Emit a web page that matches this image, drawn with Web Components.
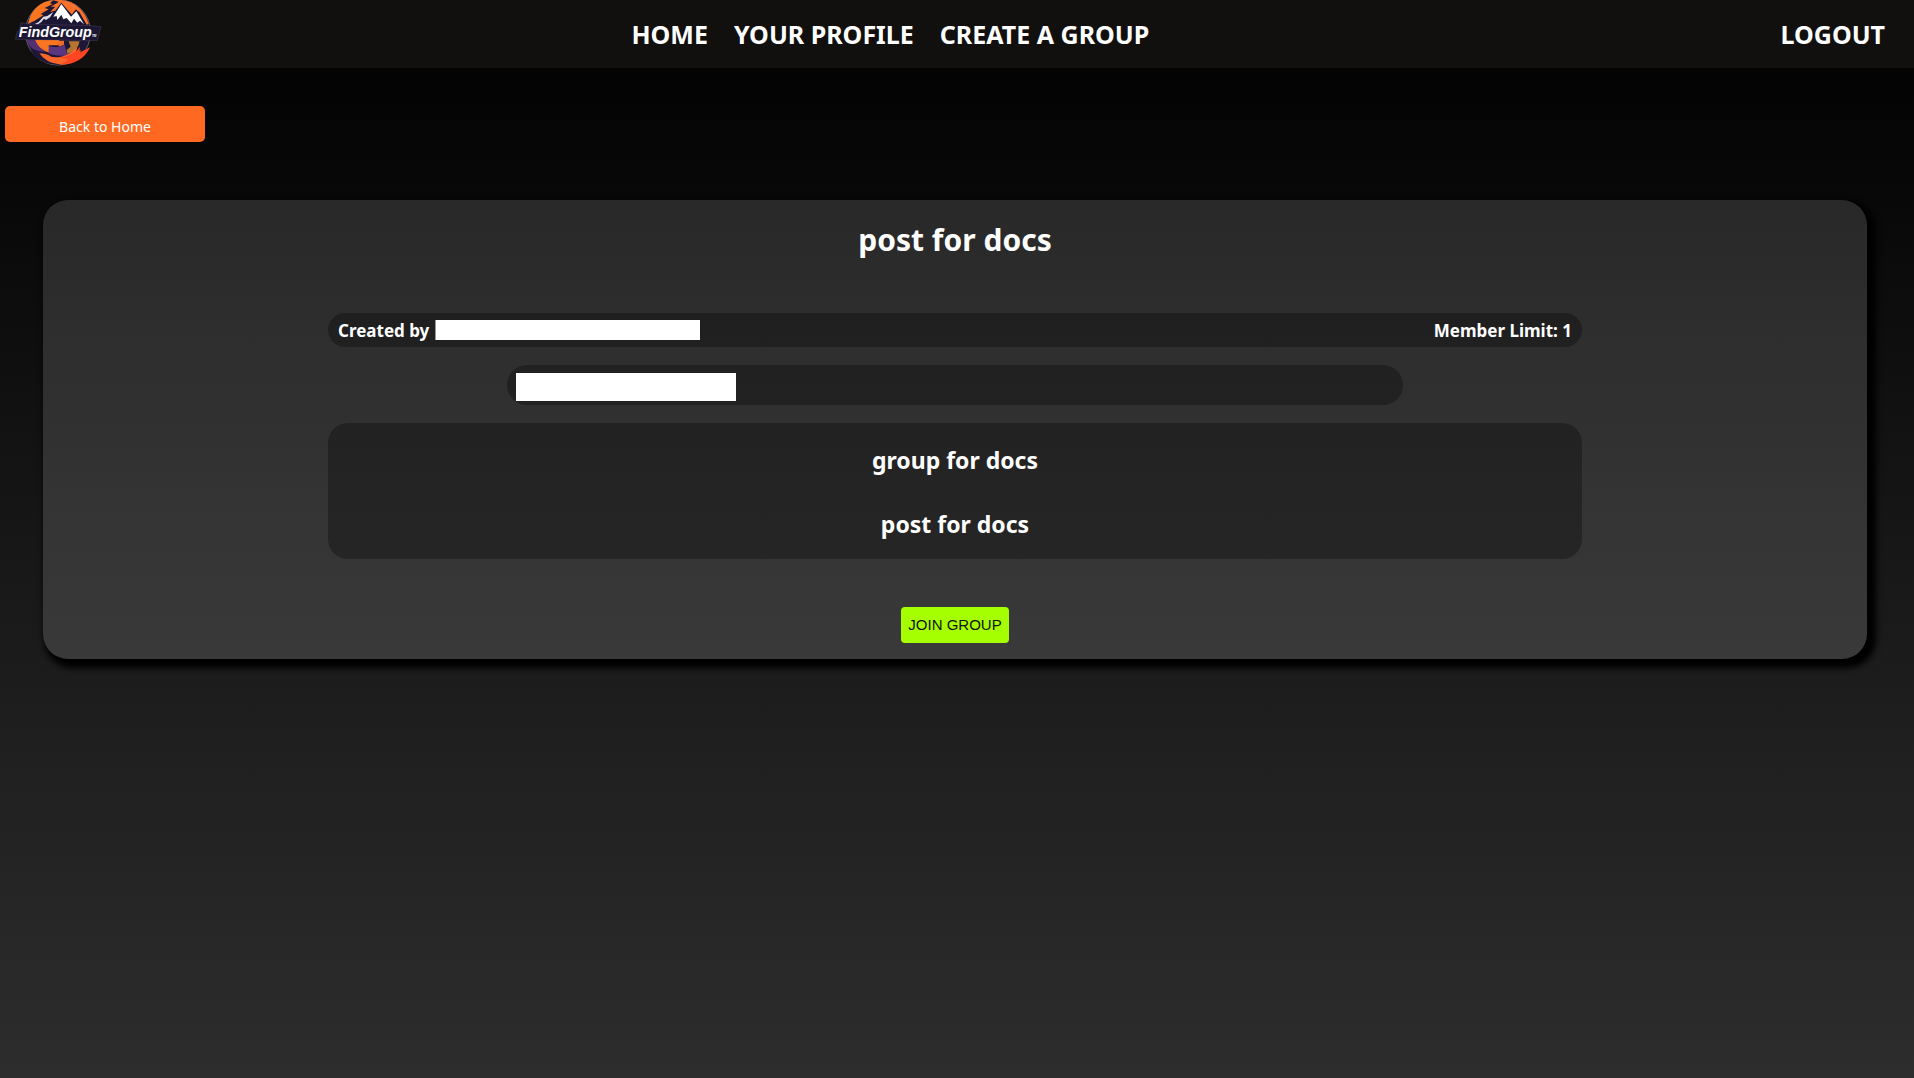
<!DOCTYPE html>
<html lang="en">
<head>
<meta charset="utf-8">
<title>FindGroup</title>
<style>
html { height: 100%; background: #2d2d2d; }
body { margin: 0; min-height: 100%; font-family: "Noto Sans", sans-serif; color: #fff; background: linear-gradient(#000, #2d2d2d); }
</style>
</head>
<body>
<group-app></group-app>
<script>
class FindGroupLogo extends HTMLElement {
  constructor() {
    super();
    this.attachShadow({ mode: "open" }).innerHTML = `
      <style>
        :host { display: block; }
        svg { display: block; width: 120px; height: 68px; }
        text { font: italic bold 43px "Liberation Sans", sans-serif; fill: #fff; }
        .tm { font-size: 9px; }
      </style>
      <svg viewBox="0 0 360 204" role="img" aria-label="FindGroup logo">
        <circle cx="174" cy="97" r="98" fill="#1d1736" stroke="#8a8490" stroke-width="2"/>
        <path d="M84 72C90 34 118 4 160 0L150 10L158 12L134 24L146 28L122 42L130 46L104 62Z" fill="#f9751f"/>
        <path d="M160 0C212 -6 254 24 266 72L260 74L238 36L228 30L216 44L184 10L166 32L150 36L166 20L152 20L176 6Z" fill="#f8702a"/>
        <path d="M98 76L122 60L128 48L146 38L166 34L184 8L214 46L228 28L262 78Z" fill="#1d1736"/>
        <path d="M104 72L116 66L130 50L142 48L160 36L150 52L138 60L132 56L124 66L112 74Z" fill="#dedbe2"/>
        <path d="M160 50L184 12L213 50L229 34L252 73L240 62L232 68L222 56L214 70L200 54L190 58L184 44L172 60L170 48Z" fill="#fff"/>
        <path d="M104 120L178 120L176 136L146 136L150 158C128 154 112 140 104 120Z" fill="#f9751f"/>
        <path d="M80 120L106 121C112 138 124 149 140 155C106 156 86 144 80 120Z" fill="#552f73"/>
        <path d="M146 137C160 142 178 144 194 134L202 166C180 170 160 166 146 160Z" fill="#5c3580"/>
        <path d="M176 122L192 122L192 134L176 140Z" fill="#f26a26"/>
        <path d="M206 124L238 124C238 140 224 156 202 162L200 150L212 140Z" fill="#b4762f"/>
        <path d="M92 150C112 162 132 160 148 166C164 174 188 172 202 166L176 194C138 194 108 180 92 150Z" fill="#1d1736"/>
        <path d="M118 160C134 160 144 164 154 170C172 174 204 172 232 140L228 158L244 150C236 168 216 188 184 193C154 192 132 180 118 160Z" fill="#f9662a"/>
        <path d="M176 172C204 172 228 158 240 140L238 158L270 142C256 176 222 195 180 195C192 190 200 184 204 178Z" fill="#ff4522"/>
        <path d="M62 68L86 72L274 77L303 80L292 122L46 118L52 94L58 92Z" fill="#1d1736" stroke="#5a5468" stroke-width="1"/>
        <text x="56" y="110">FindGroup</text>
        <text class="tm" x="276" y="111">TM</text>
      </svg>`;
  }
}
customElements.define("find-group-logo", FindGroupLogo);

class SiteNav extends HTMLElement {
  constructor() {
    super();
    this.attachShadow({ mode: "open" }).innerHTML = `
      <style>
        :host { display: block; background: #11100e; }
        nav { display: grid; grid-template-columns: 33.5% 1fr auto; align-items: center; height: 68px; padding-right: 29px; }
        ul { display: flex; gap: 26px; margin: 0; padding: 0; list-style: none; }
        li, .out { white-space: nowrap; }
        a { color: #fff; text-decoration: none; font-weight: 700; font-size: 25px; line-height: 34px; }
      </style>
      <nav>
        <find-group-logo></find-group-logo>
        <ul>
          <li><a href="#home">HOME</a></li>
          <li><a href="#profile">YOUR PROFILE</a></li>
          <li><a href="#create">CREATE A GROUP</a></li>
        </ul>
        <a class="out" href="#logout">LOGOUT</a>
      </nav>`;
  }
}
customElements.define("site-nav", SiteNav);

class InfoBar extends HTMLElement {
  constructor() {
    super();
    this.attachShadow({ mode: "open" }).innerHTML = `
      <style>
        :host { display: flex; align-items: center; justify-content: space-between; box-sizing: border-box; background: rgba(0,0,0,.29); border-radius: 20px; }
      </style>
      <slot></slot>`;
  }
}
customElements.define("info-bar", InfoBar);

class GroupPost extends HTMLElement {
  constructor() {
    super();
    this.attachShadow({ mode: "open" }).innerHTML = `
      <style>
        :host { display: flex; flex-direction: column; align-items: center; background: rgba(255,255,255,.135); border-radius: 25px; box-shadow: 5px 5px 6px 4px #000; padding: 16px 0; }
        h1 { margin: 0 0 49px; font-size: 30px; line-height: 48px; }
        .rows { width: 68.75%; display: flex; flex-direction: column; align-items: center; gap: 18px; }
        info-bar { width: 100%; }
        .meta { height: 34px; padding: 0 10px; font-weight: 700; font-size: 17px; }
        .who { display: flex; align-items: center; gap: 6px; }
        .mask { display: block; background: #fff; }
        .name { width: 264px; height: 20px; border-left: 1px solid #999; }
        .tag { width: 220px; height: 28px; }
        .contact { width: 71.5%; height: 40px; padding: 4px 9px 0; }
        .text { flex-direction: column; padding: 20px 0 18px; gap: 30px; }
        h2 { margin: 0; font-size: 23px; line-height: 34px; }
        button { margin-top: 48px; height: 36px; padding: 0 7px 2px; border: 0; border-radius: 4px; background: #a6ff00; color: #111; font: 15px "Liberation Sans", sans-serif; }
      </style>
      <h1>post for docs</h1>
      <div class="rows">
        <info-bar class="meta"><span class="who">Created by <span class="mask name"></span></span><span>Member Limit: 1</span></info-bar>
        <info-bar class="contact"><span class="mask tag"></span></info-bar>
        <info-bar class="text"><h2>group for docs</h2><h2>post for docs</h2></info-bar>
      </div>
      <button type="button">JOIN GROUP</button>`;
  }
}
customElements.define("group-post", GroupPost);

class GroupApp extends HTMLElement {
  constructor() {
    super();
    this.attachShadow({ mode: "open" }).innerHTML = `
      <style>
        :host { display: block; }
        main { display: flex; flex-direction: column; padding: 38px 47px 0 5px; }
        .back { width: 200px; height: 36px; padding: 4px 0 0; border: 0; border-radius: 5px; background: #ff6820; color: #fff; font: 14px "Noto Sans", sans-serif; }
        group-post { margin: 58px 0 0 38px; }
      </style>
      <site-nav></site-nav>
      <main>
        <button class="back" type="button">Back to Home</button>
        <group-post></group-post>
      </main>`;
  }
}
customElements.define("group-app", GroupApp);
</script>
</body>
</html>
